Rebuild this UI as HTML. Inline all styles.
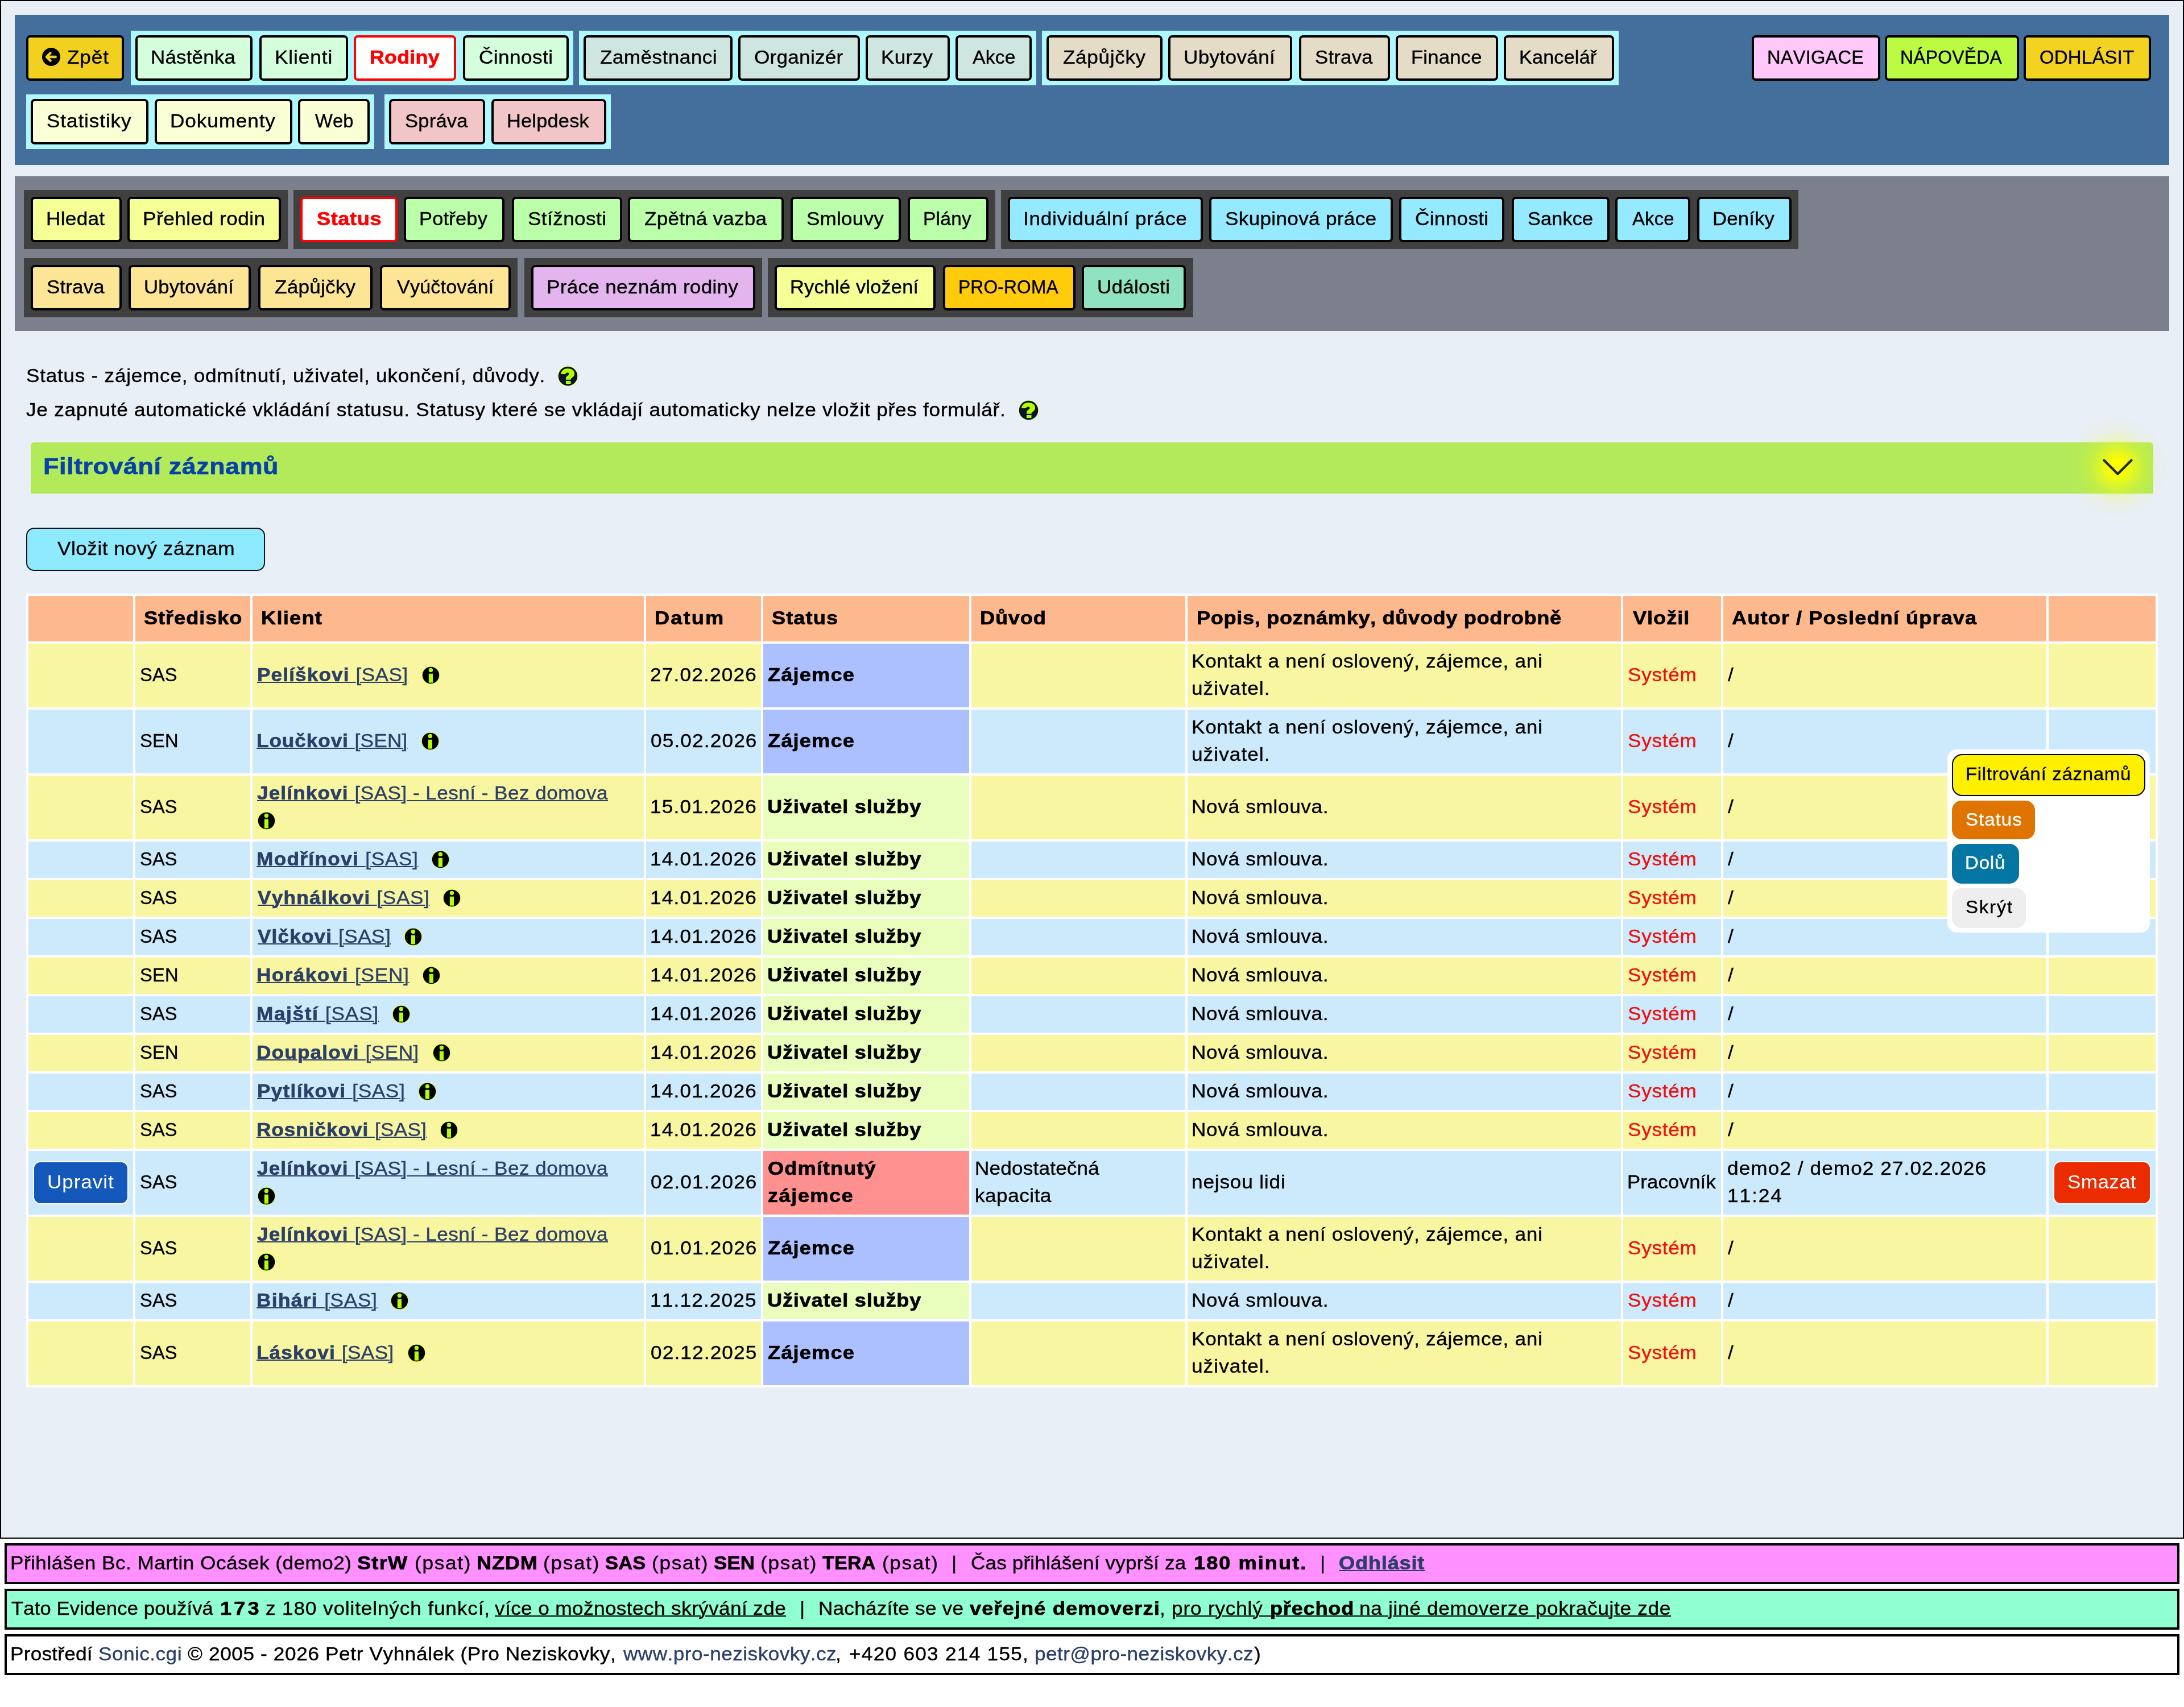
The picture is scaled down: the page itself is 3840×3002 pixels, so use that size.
<!DOCTYPE html>
<html lang="cs"><head><meta charset="utf-8"><title>Status</title><style>
html,body{margin:0;padding:0;background:#fff;}
body{width:3840px;height:3002px;position:relative;font-family:"Liberation Sans",sans-serif;font-kerning:none;}
#all{position:absolute;left:0;top:0;width:3840px;height:3002px;overflow:hidden;will-change:transform;}
.b{position:absolute;box-sizing:border-box;display:block;}
.t{position:absolute;white-space:pre;display:block;transform-origin:0 0;color:#000;-webkit-text-stroke:0.4px;text-decoration-thickness:1.6px;text-underline-offset:1px;}
b{font-weight:700;-webkit-text-stroke:0.7px;text-decoration-thickness:2.4px;}
</style></head><body><div id="all">
<div class="b" style="left:0;top:0;width:3840px;height:2706px;background:#e8eff7;border:2px solid #000"></div>
<div class="b" style="left:26px;top:26px;width:3788px;height:264px;background:#446e9b;"></div>
<div class="b" style="left:46px;top:62px;width:172px;height:80px;background:#f2d01f;border:4px solid #000;border-radius:7px;"></div>
<svg class="b" style="left:74px;top:84.0px" width="32" height="32" viewBox="0 0 32 32"><circle cx="16" cy="16" r="16" fill="#000"/><path d="M23.7 16 H8.2 M14.6 9.3 L7.9 16 L14.6 22.7" stroke="#f2d01f" stroke-width="4.4" fill="none" stroke-linecap="round" stroke-linejoin="round"/></svg>
<span class="t" style="left:117.58px;top:80.00px;font-size:33.5px;line-height:42px;letter-spacing:0.822px;transform:scaleX(1.0500);">Zpět</span>
<div class="b" style="left:230px;top:54px;width:778px;height:96px;background:#b0f8ff;"></div>
<div class="b" style="left:238px;top:62px;width:206px;height:80px;background:#d5ffdc;border:4px solid #000;border-radius:7px;"></div>
<span class="t" style="left:265.14px;top:80.00px;font-size:33.5px;line-height:42px;letter-spacing:0.200px;transform:scaleX(1.0415);">Nástěnka</span>
<div class="b" style="left:456px;top:62px;width:156px;height:80px;background:#d5ffdc;border:4px solid #000;border-radius:7px;"></div>
<span class="t" style="left:483.11px;top:80.00px;font-size:33.5px;line-height:42px;letter-spacing:0.865px;transform:scaleX(1.0500);">Klienti</span>
<div class="b" style="left:622px;top:62px;width:180px;height:80px;background:#fff;border:4px solid #f00;border-radius:7px;"></div>
<span class="t" style="left:649.60px;top:80.00px;font-size:33.5px;line-height:42px;letter-spacing:0.200px;transform:scaleX(1.0705);color:#f00;"><b>Rodiny</b></span>
<div class="b" style="left:814px;top:62px;width:186px;height:80px;background:#d5ffdc;border:4px solid #000;border-radius:7px;"></div>
<span class="t" style="left:842.21px;top:80.00px;font-size:33.5px;line-height:42px;letter-spacing:0.419px;transform:scaleX(1.0500);">Činnosti</span>
<div class="b" style="left:1018px;top:54px;width:804px;height:96px;background:#b0f8ff;"></div>
<div class="b" style="left:1026px;top:62px;width:262px;height:80px;background:#cfe6e0;border:4px solid #000;border-radius:7px;"></div>
<span class="t" style="left:1054.88px;top:80.00px;font-size:33.5px;line-height:42px;letter-spacing:0.393px;transform:scaleX(1.0500);">Zaměstnanci</span>
<div class="b" style="left:1298px;top:62px;width:214px;height:80px;background:#cfe6e0;border:4px solid #000;border-radius:7px;"></div>
<span class="t" style="left:1326.33px;top:80.00px;font-size:33.5px;line-height:42px;letter-spacing:0.215px;transform:scaleX(1.0500);">Organizér</span>
<div class="b" style="left:1522px;top:62px;width:148px;height:80px;background:#cfe6e0;border:4px solid #000;border-radius:7px;"></div>
<span class="t" style="left:1549.11px;top:80.00px;font-size:33.5px;line-height:42px;letter-spacing:0.248px;transform:scaleX(1.0500);">Kurzy</span>
<div class="b" style="left:1680px;top:62px;width:134px;height:80px;background:#cfe6e0;border:4px solid #000;border-radius:7px;"></div>
<span class="t" style="left:1709.93px;top:80.00px;font-size:33.5px;line-height:42px;letter-spacing:0.200px;transform:scaleX(1.0065);">Akce</span>
<div class="b" style="left:1832px;top:54px;width:1014px;height:96px;background:#b0f8ff;"></div>
<div class="b" style="left:1840px;top:62px;width:204px;height:80px;background:#e5dcc8;border:4px solid #000;border-radius:7px;"></div>
<span class="t" style="left:1868.88px;top:80.00px;font-size:33.5px;line-height:42px;letter-spacing:0.603px;transform:scaleX(1.0500);">Zápůjčky</span>
<div class="b" style="left:2054px;top:62px;width:218px;height:80px;background:#e5dcc8;border:4px solid #000;border-radius:7px;"></div>
<span class="t" style="left:2081.29px;top:80.00px;font-size:33.5px;line-height:42px;letter-spacing:0.299px;transform:scaleX(1.0500);">Ubytování</span>
<div class="b" style="left:2284px;top:62px;width:160px;height:80px;background:#e5dcc8;border:4px solid #000;border-radius:7px;"></div>
<span class="t" style="left:2312.42px;top:80.00px;font-size:33.5px;line-height:42px;letter-spacing:0.200px;transform:scaleX(1.0384);">Strava</span>
<div class="b" style="left:2454px;top:62px;width:180px;height:80px;background:#e5dcc8;border:4px solid #000;border-radius:7px;"></div>
<span class="t" style="left:2481.16px;top:80.00px;font-size:33.5px;line-height:42px;letter-spacing:0.200px;transform:scaleX(1.0332);">Finance</span>
<div class="b" style="left:2644px;top:62px;width:194px;height:80px;background:#e5dcc8;border:4px solid #000;border-radius:7px;"></div>
<span class="t" style="left:2671.20px;top:80.00px;font-size:33.5px;line-height:42px;letter-spacing:0.200px;transform:scaleX(1.0193);">Kancelář</span>
<div class="b" style="left:3080px;top:62px;width:226px;height:80px;background:#ffc8fa;border:4px solid #000;border-radius:7px;"></div>
<span class="t" style="left:3107.32px;top:80.00px;font-size:33.5px;line-height:42px;letter-spacing:0.200px;transform:scaleX(0.9745);">NAVIGACE</span>
<div class="b" style="left:3314px;top:62px;width:236px;height:80px;background:#bbfc43;border:4px solid #000;border-radius:7px;"></div>
<span class="t" style="left:3341.38px;top:80.00px;font-size:33.5px;line-height:42px;letter-spacing:0.200px;transform:scaleX(0.9526);">NÁPOVĚDA</span>
<div class="b" style="left:3558px;top:62px;width:224px;height:80px;background:#f4d320;border:4px solid #000;border-radius:7px;"></div>
<span class="t" style="left:3586.44px;top:80.00px;font-size:33.5px;line-height:42px;letter-spacing:0.200px;transform:scaleX(0.9845);">ODHLÁSIT</span>
<div class="b" style="left:46px;top:166px;width:612px;height:96px;background:#b0f8ff;"></div>
<div class="b" style="left:54px;top:174px;width:207px;height:80px;background:#fbffd6;border:4px solid #000;border-radius:7px;"></div>
<span class="t" style="left:82.40px;top:192.00px;font-size:33.5px;line-height:42px;letter-spacing:0.839px;transform:scaleX(1.0500);">Statistiky</span>
<div class="b" style="left:272px;top:174px;width:242px;height:80px;background:#fbffd6;border:4px solid #000;border-radius:7px;"></div>
<span class="t" style="left:299.11px;top:192.00px;font-size:33.5px;line-height:42px;letter-spacing:0.840px;transform:scaleX(1.0500);">Dokumenty</span>
<div class="b" style="left:524px;top:174px;width:126px;height:80px;background:#fbffd6;border:4px solid #000;border-radius:7px;"></div>
<span class="t" style="left:553.86px;top:192.00px;font-size:33.5px;line-height:42px;letter-spacing:0.200px;transform:scaleX(0.9745);">Web</span>
<div class="b" style="left:676px;top:166px;width:398px;height:96px;background:#b0f8ff;"></div>
<div class="b" style="left:684px;top:174px;width:169px;height:80px;background:#f2c6c9;border:4px solid #000;border-radius:7px;"></div>
<span class="t" style="left:712.43px;top:192.00px;font-size:33.5px;line-height:42px;letter-spacing:0.200px;transform:scaleX(1.0320);">Správa</span>
<div class="b" style="left:864px;top:174px;width:202px;height:80px;background:#f2c6c9;border:4px solid #000;border-radius:7px;"></div>
<span class="t" style="left:891.18px;top:192.00px;font-size:33.5px;line-height:42px;letter-spacing:0.200px;transform:scaleX(1.0263);">Helpdesk</span>
<div class="b" style="left:26px;top:310px;width:3788px;height:272px;background:#7b808c;"></div>
<div class="b" style="left:42px;top:334px;width:464px;height:104px;background:#404040;"></div>
<div class="b" style="left:54px;top:346px;width:160px;height:80px;background:#f5ff95;border:4px solid #000;border-radius:7px;"></div>
<span class="t" style="left:81.11px;top:364.00px;font-size:33.5px;line-height:42px;letter-spacing:0.279px;transform:scaleX(1.0500);">Hledat</span>
<div class="b" style="left:224px;top:346px;width:270px;height:80px;background:#f5ff95;border:4px solid #000;border-radius:7px;"></div>
<span class="t" style="left:251.11px;top:364.00px;font-size:33.5px;line-height:42px;letter-spacing:0.471px;transform:scaleX(1.0500);">Přehled rodin</span>
<div class="b" style="left:516px;top:334px;width:1234px;height:104px;background:#404040;"></div>
<div class="b" style="left:528px;top:346px;width:171px;height:80px;background:#fff;border:4px solid #f00;border-radius:7px;"></div>
<span class="t" style="left:556.96px;top:364.00px;font-size:33.5px;line-height:42px;letter-spacing:0.547px;transform:scaleX(1.0800);color:#f00;"><b>Status</b></span>
<div class="b" style="left:710px;top:346px;width:177px;height:80px;background:#bbffaa;border:4px solid #000;border-radius:7px;"></div>
<span class="t" style="left:737.18px;top:364.00px;font-size:33.5px;line-height:42px;letter-spacing:0.200px;transform:scaleX(1.0278);">Potřeby</span>
<div class="b" style="left:900px;top:346px;width:194px;height:80px;background:#bbffaa;border:4px solid #000;border-radius:7px;"></div>
<span class="t" style="left:928.40px;top:364.00px;font-size:33.5px;line-height:42px;letter-spacing:0.366px;transform:scaleX(1.0500);">Stížnosti</span>
<div class="b" style="left:1104px;top:346px;width:274px;height:80px;background:#bbffaa;border:4px solid #000;border-radius:7px;"></div>
<span class="t" style="left:1132.89px;top:364.00px;font-size:33.5px;line-height:42px;letter-spacing:0.200px;transform:scaleX(1.0483);">Zpětná vazba</span>
<div class="b" style="left:1390px;top:346px;width:194px;height:80px;background:#bbffaa;border:4px solid #000;border-radius:7px;"></div>
<span class="t" style="left:1418.41px;top:364.00px;font-size:33.5px;line-height:42px;letter-spacing:0.200px;transform:scaleX(1.0463);">Smlouvy</span>
<div class="b" style="left:1596px;top:346px;width:142px;height:80px;background:#bbffaa;border:4px solid #000;border-radius:7px;"></div>
<span class="t" style="left:1623.24px;top:364.00px;font-size:33.5px;line-height:42px;letter-spacing:0.200px;transform:scaleX(1.0026);">Plány</span>
<div class="b" style="left:1760px;top:334px;width:1402px;height:104px;background:#404040;"></div>
<div class="b" style="left:1772px;top:346px;width:343px;height:80px;background:#96eaff;border:4px solid #000;border-radius:7px;"></div>
<span class="t" style="left:1798.75px;top:364.00px;font-size:33.5px;line-height:42px;letter-spacing:0.678px;transform:scaleX(1.0500);">Individuální práce</span>
<div class="b" style="left:2126px;top:346px;width:323px;height:80px;background:#96eaff;border:4px solid #000;border-radius:7px;"></div>
<span class="t" style="left:2154.40px;top:364.00px;font-size:33.5px;line-height:42px;letter-spacing:0.281px;transform:scaleX(1.0500);">Skupinová práce</span>
<div class="b" style="left:2460px;top:346px;width:185px;height:80px;background:#96eaff;border:4px solid #000;border-radius:7px;"></div>
<span class="t" style="left:2488.21px;top:364.00px;font-size:33.5px;line-height:42px;letter-spacing:0.283px;transform:scaleX(1.0500);">Činnosti</span>
<div class="b" style="left:2658px;top:346px;width:172px;height:80px;background:#96eaff;border:4px solid #000;border-radius:7px;"></div>
<span class="t" style="left:2686.45px;top:364.00px;font-size:33.5px;line-height:42px;letter-spacing:0.200px;transform:scaleX(1.0207);">Sankce</span>
<div class="b" style="left:2840px;top:346px;width:132px;height:80px;background:#96eaff;border:4px solid #000;border-radius:7px;"></div>
<span class="t" style="left:2869.94px;top:364.00px;font-size:33.5px;line-height:42px;letter-spacing:0.200px;transform:scaleX(0.9793);">Akce</span>
<div class="b" style="left:2984px;top:346px;width:166px;height:80px;background:#96eaff;border:4px solid #000;border-radius:7px;"></div>
<span class="t" style="left:3011.16px;top:364.00px;font-size:33.5px;line-height:42px;letter-spacing:0.200px;transform:scaleX(1.0347);">Deníky</span>
<div class="b" style="left:42px;top:454px;width:868px;height:104px;background:#404040;"></div>
<div class="b" style="left:54px;top:466px;width:160px;height:80px;background:#fce695;border:4px solid #000;border-radius:7px;"></div>
<span class="t" style="left:82.42px;top:484.00px;font-size:33.5px;line-height:42px;letter-spacing:0.200px;transform:scaleX(1.0384);">Strava</span>
<div class="b" style="left:226px;top:466px;width:215px;height:80px;background:#fce695;border:4px solid #000;border-radius:7px;"></div>
<span class="t" style="left:253.32px;top:484.00px;font-size:33.5px;line-height:42px;letter-spacing:0.200px;transform:scaleX(1.0355);">Ubytování</span>
<div class="b" style="left:454px;top:466px;width:201px;height:80px;background:#fce695;border:4px solid #000;border-radius:7px;"></div>
<span class="t" style="left:482.88px;top:484.00px;font-size:33.5px;line-height:42px;letter-spacing:0.200px;transform:scaleX(1.0497);">Zápůjčky</span>
<div class="b" style="left:668px;top:466px;width:230px;height:80px;background:#fce695;border:4px solid #000;border-radius:7px;"></div>
<span class="t" style="left:697.85px;top:484.00px;font-size:33.5px;line-height:42px;letter-spacing:0.200px;transform:scaleX(1.0166);">Vyúčtování</span>
<div class="b" style="left:922px;top:454px;width:418px;height:104px;background:#404040;"></div>
<div class="b" style="left:934px;top:466px;width:394px;height:80px;background:#e3b4ee;border:4px solid #000;border-radius:7px;"></div>
<span class="t" style="left:961.11px;top:484.00px;font-size:33.5px;line-height:42px;letter-spacing:0.242px;transform:scaleX(1.0500);">Práce neznám rodiny</span>
<div class="b" style="left:1350px;top:454px;width:748px;height:104px;background:#404040;"></div>
<div class="b" style="left:1362px;top:466px;width:283px;height:80px;background:#f5ff95;border:4px solid #000;border-radius:7px;"></div>
<span class="t" style="left:1389.18px;top:484.00px;font-size:33.5px;line-height:42px;letter-spacing:0.200px;transform:scaleX(1.0251);">Rychlé vložení</span>
<div class="b" style="left:1658px;top:466px;width:233px;height:80px;background:#ffcb0b;border:4px solid #000;border-radius:7px;"></div>
<span class="t" style="left:1685.40px;top:484.00px;font-size:33.5px;line-height:42px;letter-spacing:0.200px;transform:scaleX(0.9462);">PRO-ROMA</span>
<div class="b" style="left:1902px;top:466px;width:183px;height:80px;background:#90e3c0;border:4px solid #000;border-radius:7px;"></div>
<span class="t" style="left:1929.30px;top:484.00px;font-size:33.5px;line-height:42px;letter-spacing:0.200px;transform:scaleX(1.0460);">Události</span>
<span class="t" style="left:45.90px;top:640.00px;font-size:33.5px;line-height:42px;letter-spacing:0.698px;transform:scaleX(1.0500);">Status - zájemce, odmítnutí, uživatel, ukončení, důvody.</span>
<svg class="b" style="left:980.7px;top:643.6px" width="35" height="35" viewBox="0 0 35 35"><circle cx="17.5" cy="17.5" r="17.3" fill="#d0f000"/><circle cx="17.5" cy="17.5" r="16.7" fill="#0a1424"/><path fill="#b2ff00" d="M4.8 14.1 C6 8 10.5 3.9 16.9 3.9 C24.5 3.9 29.1 8 29.1 13 C29.1 17.3 26.5 19.3 24 20.8 C22.8 21.6 22.5 22.4 22.5 23.8 L13.9 23.8 L13.9 21.8 C13.9 18.9 15.6 17.5 17.6 16.2 C19 15.3 19.7 14.6 19.7 13.6 C19.7 12.1 18.6 11.2 16.7 11.2 C14.8 11.2 13.5 12.2 13 14.1 Z M13.9 26 H22.5 V31 H13.9 Z"/></svg>
<span class="t" style="left:46.45px;top:700.00px;font-size:33.5px;line-height:42px;letter-spacing:0.703px;transform:scaleX(1.0500);">Je zapnuté automatické vkládání statusu. Statusy které se vkládají automaticky nelze vložit přes formulář.</span>
<svg class="b" style="left:1790.7px;top:703.6px" width="35" height="35" viewBox="0 0 35 35"><circle cx="17.5" cy="17.5" r="17.3" fill="#d0f000"/><circle cx="17.5" cy="17.5" r="16.7" fill="#0a1424"/><path fill="#b2ff00" d="M4.8 14.1 C6 8 10.5 3.9 16.9 3.9 C24.5 3.9 29.1 8 29.1 13 C29.1 17.3 26.5 19.3 24 20.8 C22.8 21.6 22.5 22.4 22.5 23.8 L13.9 23.8 L13.9 21.8 C13.9 18.9 15.6 17.5 17.6 16.2 C19 15.3 19.7 14.6 19.7 13.6 C19.7 12.1 18.6 11.2 16.7 11.2 C14.8 11.2 13.5 12.2 13 14.1 Z M13.9 26 H22.5 V31 H13.9 Z"/></svg>
<div class="b" style="left:54px;top:778px;width:3732px;height:90px;background:#b3ea5a;border-radius:6px 6px 0 0"></div>
<div class="b" style="left:3633px;top:732px;width:180px;height:180px;background:radial-gradient(circle closest-side,#ffff00 0%,rgba(255,255,0,.95) 16%,rgba(255,255,0,.52) 36%,rgba(255,255,0,.2) 55%,rgba(255,255,0,.06) 76%,rgba(255,255,0,0) 100%)"></div>
<svg class="b" style="left:3690px;top:800px" width="68" height="44" viewBox="0 0 68 44"><path d="M9.5 9.5 L33.5 33.5 L57.5 9.5" stroke="#222b37" stroke-width="4.4" fill="none" stroke-linecap="round" stroke-linejoin="round"/></svg>
<span class="t" style="left:76.00px;top:794.50px;font-size:41.5px;line-height:50px;letter-spacing:0.545px;transform:scaleX(1.0800);color:#0642aa;"><b>Filtrování záznamů</b></span>
<div class="b" style="left:46px;top:928px;width:420px;height:76px;background:#8eebff;border:2px solid #111;border-radius:14px;"></div>
<span class="t" style="left:101.35px;top:943.70px;font-size:33.5px;line-height:42px;letter-spacing:0.473px;transform:scaleX(1.0500);">Vložit nový záznam</span>
<div class="b" style="left:46px;top:1044px;width:3748px;height:1396px;background:#fff;"></div>
<div class="b" style="left:50px;top:1048px;width:184px;height:80px;background:#feb88e;"></div>
<div class="b" style="left:238px;top:1048px;width:202px;height:80px;background:#feb88e;"></div>
<div class="b" style="left:444px;top:1048px;width:688px;height:80px;background:#feb88e;"></div>
<div class="b" style="left:1136px;top:1048px;width:202px;height:80px;background:#feb88e;"></div>
<div class="b" style="left:1342px;top:1048px;width:362px;height:80px;background:#feb88e;"></div>
<div class="b" style="left:1708px;top:1048px;width:376px;height:80px;background:#feb88e;"></div>
<div class="b" style="left:2088px;top:1048px;width:762px;height:80px;background:#feb88e;"></div>
<div class="b" style="left:2854px;top:1048px;width:172px;height:80px;background:#feb88e;"></div>
<div class="b" style="left:3030px;top:1048px;width:568px;height:80px;background:#feb88e;"></div>
<div class="b" style="left:3602px;top:1048px;width:188px;height:80px;background:#feb88e;"></div>
<div class="b" style="left:50px;top:1132px;width:184px;height:112px;background:#f9f6a2;"></div>
<div class="b" style="left:238px;top:1132px;width:202px;height:112px;background:#f9f6a2;"></div>
<div class="b" style="left:444px;top:1132px;width:688px;height:112px;background:#f9f6a2;"></div>
<div class="b" style="left:1136px;top:1132px;width:202px;height:112px;background:#f9f6a2;"></div>
<div class="b" style="left:1342px;top:1132px;width:362px;height:112px;background:#acbfff;"></div>
<div class="b" style="left:1708px;top:1132px;width:376px;height:112px;background:#f9f6a2;"></div>
<div class="b" style="left:2088px;top:1132px;width:762px;height:112px;background:#f9f6a2;"></div>
<div class="b" style="left:2854px;top:1132px;width:172px;height:112px;background:#f9f6a2;"></div>
<div class="b" style="left:3030px;top:1132px;width:568px;height:112px;background:#f9f6a2;"></div>
<div class="b" style="left:3602px;top:1132px;width:188px;height:112px;background:#f9f6a2;"></div>
<div class="b" style="left:50px;top:1248px;width:184px;height:112px;background:#cceafb;"></div>
<div class="b" style="left:238px;top:1248px;width:202px;height:112px;background:#cceafb;"></div>
<div class="b" style="left:444px;top:1248px;width:688px;height:112px;background:#cceafb;"></div>
<div class="b" style="left:1136px;top:1248px;width:202px;height:112px;background:#cceafb;"></div>
<div class="b" style="left:1342px;top:1248px;width:362px;height:112px;background:#acbfff;"></div>
<div class="b" style="left:1708px;top:1248px;width:376px;height:112px;background:#cceafb;"></div>
<div class="b" style="left:2088px;top:1248px;width:762px;height:112px;background:#cceafb;"></div>
<div class="b" style="left:2854px;top:1248px;width:172px;height:112px;background:#cceafb;"></div>
<div class="b" style="left:3030px;top:1248px;width:568px;height:112px;background:#cceafb;"></div>
<div class="b" style="left:3602px;top:1248px;width:188px;height:112px;background:#cceafb;"></div>
<div class="b" style="left:50px;top:1364px;width:184px;height:112px;background:#f9f6a2;"></div>
<div class="b" style="left:238px;top:1364px;width:202px;height:112px;background:#f9f6a2;"></div>
<div class="b" style="left:444px;top:1364px;width:688px;height:112px;background:#f9f6a2;"></div>
<div class="b" style="left:1136px;top:1364px;width:202px;height:112px;background:#f9f6a2;"></div>
<div class="b" style="left:1342px;top:1364px;width:362px;height:112px;background:#e9fdbc;"></div>
<div class="b" style="left:1708px;top:1364px;width:376px;height:112px;background:#f9f6a2;"></div>
<div class="b" style="left:2088px;top:1364px;width:762px;height:112px;background:#f9f6a2;"></div>
<div class="b" style="left:2854px;top:1364px;width:172px;height:112px;background:#f9f6a2;"></div>
<div class="b" style="left:3030px;top:1364px;width:568px;height:112px;background:#f9f6a2;"></div>
<div class="b" style="left:3602px;top:1364px;width:188px;height:112px;background:#f9f6a2;"></div>
<div class="b" style="left:50px;top:1480px;width:184px;height:64px;background:#cceafb;"></div>
<div class="b" style="left:238px;top:1480px;width:202px;height:64px;background:#cceafb;"></div>
<div class="b" style="left:444px;top:1480px;width:688px;height:64px;background:#cceafb;"></div>
<div class="b" style="left:1136px;top:1480px;width:202px;height:64px;background:#cceafb;"></div>
<div class="b" style="left:1342px;top:1480px;width:362px;height:64px;background:#e9fdbc;"></div>
<div class="b" style="left:1708px;top:1480px;width:376px;height:64px;background:#cceafb;"></div>
<div class="b" style="left:2088px;top:1480px;width:762px;height:64px;background:#cceafb;"></div>
<div class="b" style="left:2854px;top:1480px;width:172px;height:64px;background:#cceafb;"></div>
<div class="b" style="left:3030px;top:1480px;width:568px;height:64px;background:#cceafb;"></div>
<div class="b" style="left:3602px;top:1480px;width:188px;height:64px;background:#cceafb;"></div>
<div class="b" style="left:50px;top:1548px;width:184px;height:64px;background:#f9f6a2;"></div>
<div class="b" style="left:238px;top:1548px;width:202px;height:64px;background:#f9f6a2;"></div>
<div class="b" style="left:444px;top:1548px;width:688px;height:64px;background:#f9f6a2;"></div>
<div class="b" style="left:1136px;top:1548px;width:202px;height:64px;background:#f9f6a2;"></div>
<div class="b" style="left:1342px;top:1548px;width:362px;height:64px;background:#e9fdbc;"></div>
<div class="b" style="left:1708px;top:1548px;width:376px;height:64px;background:#f9f6a2;"></div>
<div class="b" style="left:2088px;top:1548px;width:762px;height:64px;background:#f9f6a2;"></div>
<div class="b" style="left:2854px;top:1548px;width:172px;height:64px;background:#f9f6a2;"></div>
<div class="b" style="left:3030px;top:1548px;width:568px;height:64px;background:#f9f6a2;"></div>
<div class="b" style="left:3602px;top:1548px;width:188px;height:64px;background:#f9f6a2;"></div>
<div class="b" style="left:50px;top:1616px;width:184px;height:64px;background:#cceafb;"></div>
<div class="b" style="left:238px;top:1616px;width:202px;height:64px;background:#cceafb;"></div>
<div class="b" style="left:444px;top:1616px;width:688px;height:64px;background:#cceafb;"></div>
<div class="b" style="left:1136px;top:1616px;width:202px;height:64px;background:#cceafb;"></div>
<div class="b" style="left:1342px;top:1616px;width:362px;height:64px;background:#e9fdbc;"></div>
<div class="b" style="left:1708px;top:1616px;width:376px;height:64px;background:#cceafb;"></div>
<div class="b" style="left:2088px;top:1616px;width:762px;height:64px;background:#cceafb;"></div>
<div class="b" style="left:2854px;top:1616px;width:172px;height:64px;background:#cceafb;"></div>
<div class="b" style="left:3030px;top:1616px;width:568px;height:64px;background:#cceafb;"></div>
<div class="b" style="left:3602px;top:1616px;width:188px;height:64px;background:#cceafb;"></div>
<div class="b" style="left:50px;top:1684px;width:184px;height:64px;background:#f9f6a2;"></div>
<div class="b" style="left:238px;top:1684px;width:202px;height:64px;background:#f9f6a2;"></div>
<div class="b" style="left:444px;top:1684px;width:688px;height:64px;background:#f9f6a2;"></div>
<div class="b" style="left:1136px;top:1684px;width:202px;height:64px;background:#f9f6a2;"></div>
<div class="b" style="left:1342px;top:1684px;width:362px;height:64px;background:#e9fdbc;"></div>
<div class="b" style="left:1708px;top:1684px;width:376px;height:64px;background:#f9f6a2;"></div>
<div class="b" style="left:2088px;top:1684px;width:762px;height:64px;background:#f9f6a2;"></div>
<div class="b" style="left:2854px;top:1684px;width:172px;height:64px;background:#f9f6a2;"></div>
<div class="b" style="left:3030px;top:1684px;width:568px;height:64px;background:#f9f6a2;"></div>
<div class="b" style="left:3602px;top:1684px;width:188px;height:64px;background:#f9f6a2;"></div>
<div class="b" style="left:50px;top:1752px;width:184px;height:64px;background:#cceafb;"></div>
<div class="b" style="left:238px;top:1752px;width:202px;height:64px;background:#cceafb;"></div>
<div class="b" style="left:444px;top:1752px;width:688px;height:64px;background:#cceafb;"></div>
<div class="b" style="left:1136px;top:1752px;width:202px;height:64px;background:#cceafb;"></div>
<div class="b" style="left:1342px;top:1752px;width:362px;height:64px;background:#e9fdbc;"></div>
<div class="b" style="left:1708px;top:1752px;width:376px;height:64px;background:#cceafb;"></div>
<div class="b" style="left:2088px;top:1752px;width:762px;height:64px;background:#cceafb;"></div>
<div class="b" style="left:2854px;top:1752px;width:172px;height:64px;background:#cceafb;"></div>
<div class="b" style="left:3030px;top:1752px;width:568px;height:64px;background:#cceafb;"></div>
<div class="b" style="left:3602px;top:1752px;width:188px;height:64px;background:#cceafb;"></div>
<div class="b" style="left:50px;top:1820px;width:184px;height:64px;background:#f9f6a2;"></div>
<div class="b" style="left:238px;top:1820px;width:202px;height:64px;background:#f9f6a2;"></div>
<div class="b" style="left:444px;top:1820px;width:688px;height:64px;background:#f9f6a2;"></div>
<div class="b" style="left:1136px;top:1820px;width:202px;height:64px;background:#f9f6a2;"></div>
<div class="b" style="left:1342px;top:1820px;width:362px;height:64px;background:#e9fdbc;"></div>
<div class="b" style="left:1708px;top:1820px;width:376px;height:64px;background:#f9f6a2;"></div>
<div class="b" style="left:2088px;top:1820px;width:762px;height:64px;background:#f9f6a2;"></div>
<div class="b" style="left:2854px;top:1820px;width:172px;height:64px;background:#f9f6a2;"></div>
<div class="b" style="left:3030px;top:1820px;width:568px;height:64px;background:#f9f6a2;"></div>
<div class="b" style="left:3602px;top:1820px;width:188px;height:64px;background:#f9f6a2;"></div>
<div class="b" style="left:50px;top:1888px;width:184px;height:64px;background:#cceafb;"></div>
<div class="b" style="left:238px;top:1888px;width:202px;height:64px;background:#cceafb;"></div>
<div class="b" style="left:444px;top:1888px;width:688px;height:64px;background:#cceafb;"></div>
<div class="b" style="left:1136px;top:1888px;width:202px;height:64px;background:#cceafb;"></div>
<div class="b" style="left:1342px;top:1888px;width:362px;height:64px;background:#e9fdbc;"></div>
<div class="b" style="left:1708px;top:1888px;width:376px;height:64px;background:#cceafb;"></div>
<div class="b" style="left:2088px;top:1888px;width:762px;height:64px;background:#cceafb;"></div>
<div class="b" style="left:2854px;top:1888px;width:172px;height:64px;background:#cceafb;"></div>
<div class="b" style="left:3030px;top:1888px;width:568px;height:64px;background:#cceafb;"></div>
<div class="b" style="left:3602px;top:1888px;width:188px;height:64px;background:#cceafb;"></div>
<div class="b" style="left:50px;top:1956px;width:184px;height:64px;background:#f9f6a2;"></div>
<div class="b" style="left:238px;top:1956px;width:202px;height:64px;background:#f9f6a2;"></div>
<div class="b" style="left:444px;top:1956px;width:688px;height:64px;background:#f9f6a2;"></div>
<div class="b" style="left:1136px;top:1956px;width:202px;height:64px;background:#f9f6a2;"></div>
<div class="b" style="left:1342px;top:1956px;width:362px;height:64px;background:#e9fdbc;"></div>
<div class="b" style="left:1708px;top:1956px;width:376px;height:64px;background:#f9f6a2;"></div>
<div class="b" style="left:2088px;top:1956px;width:762px;height:64px;background:#f9f6a2;"></div>
<div class="b" style="left:2854px;top:1956px;width:172px;height:64px;background:#f9f6a2;"></div>
<div class="b" style="left:3030px;top:1956px;width:568px;height:64px;background:#f9f6a2;"></div>
<div class="b" style="left:3602px;top:1956px;width:188px;height:64px;background:#f9f6a2;"></div>
<div class="b" style="left:50px;top:2024px;width:184px;height:112px;background:#cceafb;"></div>
<div class="b" style="left:238px;top:2024px;width:202px;height:112px;background:#cceafb;"></div>
<div class="b" style="left:444px;top:2024px;width:688px;height:112px;background:#cceafb;"></div>
<div class="b" style="left:1136px;top:2024px;width:202px;height:112px;background:#cceafb;"></div>
<div class="b" style="left:1342px;top:2024px;width:362px;height:112px;background:#ff9090;"></div>
<div class="b" style="left:1708px;top:2024px;width:376px;height:112px;background:#cceafb;"></div>
<div class="b" style="left:2088px;top:2024px;width:762px;height:112px;background:#cceafb;"></div>
<div class="b" style="left:2854px;top:2024px;width:172px;height:112px;background:#cceafb;"></div>
<div class="b" style="left:3030px;top:2024px;width:568px;height:112px;background:#cceafb;"></div>
<div class="b" style="left:3602px;top:2024px;width:188px;height:112px;background:#cceafb;"></div>
<div class="b" style="left:50px;top:2140px;width:184px;height:112px;background:#f9f6a2;"></div>
<div class="b" style="left:238px;top:2140px;width:202px;height:112px;background:#f9f6a2;"></div>
<div class="b" style="left:444px;top:2140px;width:688px;height:112px;background:#f9f6a2;"></div>
<div class="b" style="left:1136px;top:2140px;width:202px;height:112px;background:#f9f6a2;"></div>
<div class="b" style="left:1342px;top:2140px;width:362px;height:112px;background:#acbfff;"></div>
<div class="b" style="left:1708px;top:2140px;width:376px;height:112px;background:#f9f6a2;"></div>
<div class="b" style="left:2088px;top:2140px;width:762px;height:112px;background:#f9f6a2;"></div>
<div class="b" style="left:2854px;top:2140px;width:172px;height:112px;background:#f9f6a2;"></div>
<div class="b" style="left:3030px;top:2140px;width:568px;height:112px;background:#f9f6a2;"></div>
<div class="b" style="left:3602px;top:2140px;width:188px;height:112px;background:#f9f6a2;"></div>
<div class="b" style="left:50px;top:2256px;width:184px;height:64px;background:#cceafb;"></div>
<div class="b" style="left:238px;top:2256px;width:202px;height:64px;background:#cceafb;"></div>
<div class="b" style="left:444px;top:2256px;width:688px;height:64px;background:#cceafb;"></div>
<div class="b" style="left:1136px;top:2256px;width:202px;height:64px;background:#cceafb;"></div>
<div class="b" style="left:1342px;top:2256px;width:362px;height:64px;background:#e9fdbc;"></div>
<div class="b" style="left:1708px;top:2256px;width:376px;height:64px;background:#cceafb;"></div>
<div class="b" style="left:2088px;top:2256px;width:762px;height:64px;background:#cceafb;"></div>
<div class="b" style="left:2854px;top:2256px;width:172px;height:64px;background:#cceafb;"></div>
<div class="b" style="left:3030px;top:2256px;width:568px;height:64px;background:#cceafb;"></div>
<div class="b" style="left:3602px;top:2256px;width:188px;height:64px;background:#cceafb;"></div>
<div class="b" style="left:50px;top:2324px;width:184px;height:112px;background:#f9f6a2;"></div>
<div class="b" style="left:238px;top:2324px;width:202px;height:112px;background:#f9f6a2;"></div>
<div class="b" style="left:444px;top:2324px;width:688px;height:112px;background:#f9f6a2;"></div>
<div class="b" style="left:1136px;top:2324px;width:202px;height:112px;background:#f9f6a2;"></div>
<div class="b" style="left:1342px;top:2324px;width:362px;height:112px;background:#acbfff;"></div>
<div class="b" style="left:1708px;top:2324px;width:376px;height:112px;background:#f9f6a2;"></div>
<div class="b" style="left:2088px;top:2324px;width:762px;height:112px;background:#f9f6a2;"></div>
<div class="b" style="left:2854px;top:2324px;width:172px;height:112px;background:#f9f6a2;"></div>
<div class="b" style="left:3030px;top:2324px;width:568px;height:112px;background:#f9f6a2;"></div>
<div class="b" style="left:3602px;top:2324px;width:188px;height:112px;background:#f9f6a2;"></div>
<span class="t" style="left:252.96px;top:1065.50px;font-size:33.5px;line-height:42px;letter-spacing:0.877px;transform:scaleX(1.0800);"><b>Středisko</b></span>
<span class="t" style="left:458.58px;top:1065.50px;font-size:33.5px;line-height:42px;letter-spacing:1.178px;transform:scaleX(1.0800);"><b>Klient</b></span>
<span class="t" style="left:1150.58px;top:1065.50px;font-size:33.5px;line-height:42px;letter-spacing:1.990px;transform:scaleX(1.0800);"><b>Datum</b></span>
<span class="t" style="left:1357.46px;top:1065.50px;font-size:33.5px;line-height:42px;letter-spacing:1.010px;transform:scaleX(1.0800);"><b>Status</b></span>
<span class="t" style="left:1722.58px;top:1065.50px;font-size:33.5px;line-height:42px;letter-spacing:0.753px;transform:scaleX(1.0800);"><b>Důvod</b></span>
<span class="t" style="left:2103.58px;top:1065.50px;font-size:33.5px;line-height:42px;letter-spacing:0.598px;transform:scaleX(1.0800);"><b>Popis, poznámky, důvody podrobně</b></span>
<span class="t" style="left:2871.25px;top:1065.50px;font-size:33.5px;line-height:42px;letter-spacing:0.895px;transform:scaleX(1.0800);"><b>Vložil</b></span>
<span class="t" style="left:3045.10px;top:1065.50px;font-size:33.5px;line-height:42px;letter-spacing:1.014px;transform:scaleX(1.0800);"><b>Autor / Poslední úprava</b></span>
<span class="t" style="left:245.52px;top:1166.00px;font-size:33.5px;line-height:42px;letter-spacing:0.200px;transform:scaleX(0.9709);">SAS</span>
<span class="t" style="left:452.15px;top:1166.00px;font-size:33.5px;line-height:42px;letter-spacing:0.416px;transform:scaleX(1.0500);color:#2b3f68;text-decoration-line:underline;"><b style="letter-spacing:1.066px">Pelíškovi </b>[SAS]</span>
<svg class="b" style="left:741.7px;top:1172.3px" width="31" height="31" viewBox="0 0 31 31"><circle cx="15.5" cy="15.5" r="15.5" fill="#d8ff00"/><circle cx="15.5" cy="15.5" r="14.7" fill="#000"/><circle cx="15.4" cy="6.4" r="3.7" fill="#b2ff00"/><rect x="11.8" y="12.7" width="7.2" height="15.9" fill="#b2ff00"/></svg>
<span class="t" style="left:1143.23px;top:1166.00px;font-size:33.5px;line-height:42px;letter-spacing:1.139px;transform:scaleX(1.0500);">27.02.2026</span>
<span class="t" style="left:1349.92px;top:1166.00px;font-size:33.5px;line-height:42px;letter-spacing:1.081px;transform:scaleX(1.0800);"><b>Zájemce</b></span>
<span class="t" style="left:2094.61px;top:1142.00px;font-size:33.5px;line-height:42px;letter-spacing:0.643px;transform:scaleX(1.0500);">Kontakt a není oslovený, zájemce, ani</span>
<span class="t" style="left:2095.22px;top:1190.00px;font-size:33.5px;line-height:42px;letter-spacing:1.007px;transform:scaleX(1.0500);">uživatel.</span>
<span class="t" style="left:2862.40px;top:1166.00px;font-size:33.5px;line-height:42px;letter-spacing:0.694px;transform:scaleX(1.0500);color:#ee1111;">Systém</span>
<span class="t" style="left:3037.50px;top:1166.00px;font-size:33.5px;line-height:42px;letter-spacing:0.600px;transform:scaleX(1.0500);">/</span>
<span class="t" style="left:245.51px;top:1282.00px;font-size:33.5px;line-height:42px;letter-spacing:0.200px;transform:scaleX(0.9765);">SEN</span>
<span class="t" style="left:450.95px;top:1282.00px;font-size:33.5px;line-height:42px;letter-spacing:0.232px;transform:scaleX(1.0500);color:#2b3f68;text-decoration-line:underline;"><b style="letter-spacing:0.882px">Loučkovi </b>[SEN]</span>
<svg class="b" style="left:740.7px;top:1288.3px" width="31" height="31" viewBox="0 0 31 31"><circle cx="15.5" cy="15.5" r="15.5" fill="#d8ff00"/><circle cx="15.5" cy="15.5" r="14.7" fill="#000"/><circle cx="15.4" cy="6.4" r="3.7" fill="#b2ff00"/><rect x="11.8" y="12.7" width="7.2" height="15.9" fill="#b2ff00"/></svg>
<span class="t" style="left:1143.63px;top:1282.00px;font-size:33.5px;line-height:42px;letter-spacing:1.098px;transform:scaleX(1.0500);">05.02.2026</span>
<span class="t" style="left:1349.92px;top:1282.00px;font-size:33.5px;line-height:42px;letter-spacing:1.081px;transform:scaleX(1.0800);"><b>Zájemce</b></span>
<span class="t" style="left:2094.61px;top:1258.00px;font-size:33.5px;line-height:42px;letter-spacing:0.643px;transform:scaleX(1.0500);">Kontakt a není oslovený, zájemce, ani</span>
<span class="t" style="left:2095.22px;top:1306.00px;font-size:33.5px;line-height:42px;letter-spacing:1.007px;transform:scaleX(1.0500);">uživatel.</span>
<span class="t" style="left:2862.40px;top:1282.00px;font-size:33.5px;line-height:42px;letter-spacing:0.694px;transform:scaleX(1.0500);color:#ee1111;">Systém</span>
<span class="t" style="left:3037.50px;top:1282.00px;font-size:33.5px;line-height:42px;letter-spacing:0.600px;transform:scaleX(1.0500);">/</span>
<span class="t" style="left:245.52px;top:1398.00px;font-size:33.5px;line-height:42px;letter-spacing:0.200px;transform:scaleX(0.9709);">SAS</span>
<span class="t" style="left:451.67px;top:1374.00px;font-size:33.5px;line-height:42px;letter-spacing:0.418px;transform:scaleX(1.0500);color:#2b3f68;text-decoration-line:underline;"><b style="letter-spacing:1.068px">Jelínkovi </b>[SAS] - Lesní - Bez domova</span>
<svg class="b" style="left:452.6px;top:1428.2px" width="31" height="31" viewBox="0 0 31 31"><circle cx="15.5" cy="15.5" r="15.5" fill="#d8ff00"/><circle cx="15.5" cy="15.5" r="14.7" fill="#000"/><circle cx="15.4" cy="6.4" r="3.7" fill="#b2ff00"/><rect x="11.8" y="12.7" width="7.2" height="15.9" fill="#b2ff00"/></svg>
<span class="t" style="left:1143.32px;top:1398.00px;font-size:33.5px;line-height:42px;letter-spacing:1.130px;transform:scaleX(1.0500);">15.01.2026</span>
<span class="t" style="left:1348.83px;top:1398.00px;font-size:33.5px;line-height:42px;letter-spacing:0.727px;transform:scaleX(1.0800);"><b>Uživatel služby</b></span>
<span class="t" style="left:2094.61px;top:1398.00px;font-size:33.5px;line-height:42px;letter-spacing:0.632px;transform:scaleX(1.0500);">Nová smlouva.</span>
<span class="t" style="left:2862.40px;top:1398.00px;font-size:33.5px;line-height:42px;letter-spacing:0.694px;transform:scaleX(1.0500);color:#ee1111;">Systém</span>
<span class="t" style="left:3037.50px;top:1398.00px;font-size:33.5px;line-height:42px;letter-spacing:0.600px;transform:scaleX(1.0500);">/</span>
<span class="t" style="left:245.52px;top:1490.00px;font-size:33.5px;line-height:42px;letter-spacing:0.200px;transform:scaleX(0.9709);">SAS</span>
<span class="t" style="left:450.95px;top:1490.00px;font-size:33.5px;line-height:42px;letter-spacing:0.632px;transform:scaleX(1.0500);color:#2b3f68;text-decoration-line:underline;"><b style="letter-spacing:1.282px">Modřínovi </b>[SAS]</span>
<svg class="b" style="left:759.2px;top:1496.3px" width="31" height="31" viewBox="0 0 31 31"><circle cx="15.5" cy="15.5" r="15.5" fill="#d8ff00"/><circle cx="15.5" cy="15.5" r="14.7" fill="#000"/><circle cx="15.4" cy="6.4" r="3.7" fill="#b2ff00"/><rect x="11.8" y="12.7" width="7.2" height="15.9" fill="#b2ff00"/></svg>
<span class="t" style="left:1143.32px;top:1490.00px;font-size:33.5px;line-height:42px;letter-spacing:1.130px;transform:scaleX(1.0500);">14.01.2026</span>
<span class="t" style="left:1348.83px;top:1490.00px;font-size:33.5px;line-height:42px;letter-spacing:0.727px;transform:scaleX(1.0800);"><b>Uživatel služby</b></span>
<span class="t" style="left:2094.61px;top:1490.00px;font-size:33.5px;line-height:42px;letter-spacing:0.632px;transform:scaleX(1.0500);">Nová smlouva.</span>
<span class="t" style="left:2862.40px;top:1490.00px;font-size:33.5px;line-height:42px;letter-spacing:0.694px;transform:scaleX(1.0500);color:#ee1111;">Systém</span>
<span class="t" style="left:3037.50px;top:1490.00px;font-size:33.5px;line-height:42px;letter-spacing:0.600px;transform:scaleX(1.0500);">/</span>
<span class="t" style="left:245.52px;top:1558.00px;font-size:33.5px;line-height:42px;letter-spacing:0.200px;transform:scaleX(0.9709);">SAS</span>
<span class="t" style="left:453.06px;top:1558.00px;font-size:33.5px;line-height:42px;letter-spacing:0.560px;transform:scaleX(1.0500);color:#2b3f68;text-decoration-line:underline;"><b style="letter-spacing:1.210px">Vyhnálkovi </b>[SAS]</span>
<svg class="b" style="left:779.2px;top:1564.3px" width="31" height="31" viewBox="0 0 31 31"><circle cx="15.5" cy="15.5" r="15.5" fill="#d8ff00"/><circle cx="15.5" cy="15.5" r="14.7" fill="#000"/><circle cx="15.4" cy="6.4" r="3.7" fill="#b2ff00"/><rect x="11.8" y="12.7" width="7.2" height="15.9" fill="#b2ff00"/></svg>
<span class="t" style="left:1143.32px;top:1558.00px;font-size:33.5px;line-height:42px;letter-spacing:1.130px;transform:scaleX(1.0500);">14.01.2026</span>
<span class="t" style="left:1348.83px;top:1558.00px;font-size:33.5px;line-height:42px;letter-spacing:0.727px;transform:scaleX(1.0800);"><b>Uživatel služby</b></span>
<span class="t" style="left:2094.61px;top:1558.00px;font-size:33.5px;line-height:42px;letter-spacing:0.632px;transform:scaleX(1.0500);">Nová smlouva.</span>
<span class="t" style="left:2862.40px;top:1558.00px;font-size:33.5px;line-height:42px;letter-spacing:0.694px;transform:scaleX(1.0500);color:#ee1111;">Systém</span>
<span class="t" style="left:3037.50px;top:1558.00px;font-size:33.5px;line-height:42px;letter-spacing:0.600px;transform:scaleX(1.0500);">/</span>
<span class="t" style="left:245.52px;top:1626.00px;font-size:33.5px;line-height:42px;letter-spacing:0.200px;transform:scaleX(0.9709);">SAS</span>
<span class="t" style="left:453.06px;top:1626.00px;font-size:33.5px;line-height:42px;letter-spacing:0.429px;transform:scaleX(1.0500);color:#2b3f68;text-decoration-line:underline;"><b style="letter-spacing:1.079px">Vlčkovi </b>[SAS]</span>
<svg class="b" style="left:711.2px;top:1632.3px" width="31" height="31" viewBox="0 0 31 31"><circle cx="15.5" cy="15.5" r="15.5" fill="#d8ff00"/><circle cx="15.5" cy="15.5" r="14.7" fill="#000"/><circle cx="15.4" cy="6.4" r="3.7" fill="#b2ff00"/><rect x="11.8" y="12.7" width="7.2" height="15.9" fill="#b2ff00"/></svg>
<span class="t" style="left:1143.32px;top:1626.00px;font-size:33.5px;line-height:42px;letter-spacing:1.130px;transform:scaleX(1.0500);">14.01.2026</span>
<span class="t" style="left:1348.83px;top:1626.00px;font-size:33.5px;line-height:42px;letter-spacing:0.727px;transform:scaleX(1.0800);"><b>Uživatel služby</b></span>
<span class="t" style="left:2094.61px;top:1626.00px;font-size:33.5px;line-height:42px;letter-spacing:0.632px;transform:scaleX(1.0500);">Nová smlouva.</span>
<span class="t" style="left:2862.40px;top:1626.00px;font-size:33.5px;line-height:42px;letter-spacing:0.694px;transform:scaleX(1.0500);color:#ee1111;">Systém</span>
<span class="t" style="left:3037.50px;top:1626.00px;font-size:33.5px;line-height:42px;letter-spacing:0.600px;transform:scaleX(1.0500);">/</span>
<span class="t" style="left:245.51px;top:1694.00px;font-size:33.5px;line-height:42px;letter-spacing:0.200px;transform:scaleX(0.9765);">SEN</span>
<span class="t" style="left:450.95px;top:1694.00px;font-size:33.5px;line-height:42px;letter-spacing:0.700px;transform:scaleX(1.0500);color:#2b3f68;text-decoration-line:underline;"><b style="letter-spacing:1.350px">Horákovi </b>[SEN]</span>
<svg class="b" style="left:743.2px;top:1700.3px" width="31" height="31" viewBox="0 0 31 31"><circle cx="15.5" cy="15.5" r="15.5" fill="#d8ff00"/><circle cx="15.5" cy="15.5" r="14.7" fill="#000"/><circle cx="15.4" cy="6.4" r="3.7" fill="#b2ff00"/><rect x="11.8" y="12.7" width="7.2" height="15.9" fill="#b2ff00"/></svg>
<span class="t" style="left:1143.32px;top:1694.00px;font-size:33.5px;line-height:42px;letter-spacing:1.130px;transform:scaleX(1.0500);">14.01.2026</span>
<span class="t" style="left:1348.83px;top:1694.00px;font-size:33.5px;line-height:42px;letter-spacing:0.727px;transform:scaleX(1.0800);"><b>Uživatel služby</b></span>
<span class="t" style="left:2094.61px;top:1694.00px;font-size:33.5px;line-height:42px;letter-spacing:0.632px;transform:scaleX(1.0500);">Nová smlouva.</span>
<span class="t" style="left:2862.40px;top:1694.00px;font-size:33.5px;line-height:42px;letter-spacing:0.694px;transform:scaleX(1.0500);color:#ee1111;">Systém</span>
<span class="t" style="left:3037.50px;top:1694.00px;font-size:33.5px;line-height:42px;letter-spacing:0.600px;transform:scaleX(1.0500);">/</span>
<span class="t" style="left:245.52px;top:1762.00px;font-size:33.5px;line-height:42px;letter-spacing:0.200px;transform:scaleX(0.9709);">SAS</span>
<span class="t" style="left:450.95px;top:1762.00px;font-size:33.5px;line-height:42px;letter-spacing:0.883px;transform:scaleX(1.0500);color:#2b3f68;text-decoration-line:underline;"><b style="letter-spacing:1.533px">Majští </b>[SAS]</span>
<svg class="b" style="left:689.7px;top:1768.3px" width="31" height="31" viewBox="0 0 31 31"><circle cx="15.5" cy="15.5" r="15.5" fill="#d8ff00"/><circle cx="15.5" cy="15.5" r="14.7" fill="#000"/><circle cx="15.4" cy="6.4" r="3.7" fill="#b2ff00"/><rect x="11.8" y="12.7" width="7.2" height="15.9" fill="#b2ff00"/></svg>
<span class="t" style="left:1143.32px;top:1762.00px;font-size:33.5px;line-height:42px;letter-spacing:1.130px;transform:scaleX(1.0500);">14.01.2026</span>
<span class="t" style="left:1348.83px;top:1762.00px;font-size:33.5px;line-height:42px;letter-spacing:0.727px;transform:scaleX(1.0800);"><b>Uživatel služby</b></span>
<span class="t" style="left:2094.61px;top:1762.00px;font-size:33.5px;line-height:42px;letter-spacing:0.632px;transform:scaleX(1.0500);">Nová smlouva.</span>
<span class="t" style="left:2862.40px;top:1762.00px;font-size:33.5px;line-height:42px;letter-spacing:0.694px;transform:scaleX(1.0500);color:#ee1111;">Systém</span>
<span class="t" style="left:3037.50px;top:1762.00px;font-size:33.5px;line-height:42px;letter-spacing:0.600px;transform:scaleX(1.0500);">/</span>
<span class="t" style="left:245.51px;top:1830.00px;font-size:33.5px;line-height:42px;letter-spacing:0.200px;transform:scaleX(0.9765);">SEN</span>
<span class="t" style="left:450.95px;top:1830.00px;font-size:33.5px;line-height:42px;letter-spacing:0.468px;transform:scaleX(1.0500);color:#2b3f68;text-decoration-line:underline;"><b style="letter-spacing:1.118px">Doupalovi </b>[SEN]</span>
<svg class="b" style="left:760.7px;top:1836.3px" width="31" height="31" viewBox="0 0 31 31"><circle cx="15.5" cy="15.5" r="15.5" fill="#d8ff00"/><circle cx="15.5" cy="15.5" r="14.7" fill="#000"/><circle cx="15.4" cy="6.4" r="3.7" fill="#b2ff00"/><rect x="11.8" y="12.7" width="7.2" height="15.9" fill="#b2ff00"/></svg>
<span class="t" style="left:1143.32px;top:1830.00px;font-size:33.5px;line-height:42px;letter-spacing:1.130px;transform:scaleX(1.0500);">14.01.2026</span>
<span class="t" style="left:1348.83px;top:1830.00px;font-size:33.5px;line-height:42px;letter-spacing:0.727px;transform:scaleX(1.0800);"><b>Uživatel služby</b></span>
<span class="t" style="left:2094.61px;top:1830.00px;font-size:33.5px;line-height:42px;letter-spacing:0.632px;transform:scaleX(1.0500);">Nová smlouva.</span>
<span class="t" style="left:2862.40px;top:1830.00px;font-size:33.5px;line-height:42px;letter-spacing:0.694px;transform:scaleX(1.0500);color:#ee1111;">Systém</span>
<span class="t" style="left:3037.50px;top:1830.00px;font-size:33.5px;line-height:42px;letter-spacing:0.600px;transform:scaleX(1.0500);">/</span>
<span class="t" style="left:245.52px;top:1898.00px;font-size:33.5px;line-height:42px;letter-spacing:0.200px;transform:scaleX(0.9709);">SAS</span>
<span class="t" style="left:452.15px;top:1898.00px;font-size:33.5px;line-height:42px;letter-spacing:0.576px;transform:scaleX(1.0500);color:#2b3f68;text-decoration-line:underline;"><b style="letter-spacing:1.226px">Pytlíkovi </b>[SAS]</span>
<svg class="b" style="left:736.2px;top:1904.3px" width="31" height="31" viewBox="0 0 31 31"><circle cx="15.5" cy="15.5" r="15.5" fill="#d8ff00"/><circle cx="15.5" cy="15.5" r="14.7" fill="#000"/><circle cx="15.4" cy="6.4" r="3.7" fill="#b2ff00"/><rect x="11.8" y="12.7" width="7.2" height="15.9" fill="#b2ff00"/></svg>
<span class="t" style="left:1143.32px;top:1898.00px;font-size:33.5px;line-height:42px;letter-spacing:1.130px;transform:scaleX(1.0500);">14.01.2026</span>
<span class="t" style="left:1348.83px;top:1898.00px;font-size:33.5px;line-height:42px;letter-spacing:0.727px;transform:scaleX(1.0800);"><b>Uživatel služby</b></span>
<span class="t" style="left:2094.61px;top:1898.00px;font-size:33.5px;line-height:42px;letter-spacing:0.632px;transform:scaleX(1.0500);">Nová smlouva.</span>
<span class="t" style="left:2862.40px;top:1898.00px;font-size:33.5px;line-height:42px;letter-spacing:0.694px;transform:scaleX(1.0500);color:#ee1111;">Systém</span>
<span class="t" style="left:3037.50px;top:1898.00px;font-size:33.5px;line-height:42px;letter-spacing:0.600px;transform:scaleX(1.0500);">/</span>
<span class="t" style="left:245.52px;top:1966.00px;font-size:33.5px;line-height:42px;letter-spacing:0.200px;transform:scaleX(0.9709);">SAS</span>
<span class="t" style="left:450.95px;top:1966.00px;font-size:33.5px;line-height:42px;letter-spacing:0.254px;transform:scaleX(1.0500);color:#2b3f68;text-decoration-line:underline;"><b style="letter-spacing:0.904px">Rosničkovi </b>[SAS]</span>
<svg class="b" style="left:774.2px;top:1972.3px" width="31" height="31" viewBox="0 0 31 31"><circle cx="15.5" cy="15.5" r="15.5" fill="#d8ff00"/><circle cx="15.5" cy="15.5" r="14.7" fill="#000"/><circle cx="15.4" cy="6.4" r="3.7" fill="#b2ff00"/><rect x="11.8" y="12.7" width="7.2" height="15.9" fill="#b2ff00"/></svg>
<span class="t" style="left:1143.32px;top:1966.00px;font-size:33.5px;line-height:42px;letter-spacing:1.130px;transform:scaleX(1.0500);">14.01.2026</span>
<span class="t" style="left:1348.83px;top:1966.00px;font-size:33.5px;line-height:42px;letter-spacing:0.727px;transform:scaleX(1.0800);"><b>Uživatel služby</b></span>
<span class="t" style="left:2094.61px;top:1966.00px;font-size:33.5px;line-height:42px;letter-spacing:0.632px;transform:scaleX(1.0500);">Nová smlouva.</span>
<span class="t" style="left:2862.40px;top:1966.00px;font-size:33.5px;line-height:42px;letter-spacing:0.694px;transform:scaleX(1.0500);color:#ee1111;">Systém</span>
<span class="t" style="left:3037.50px;top:1966.00px;font-size:33.5px;line-height:42px;letter-spacing:0.600px;transform:scaleX(1.0500);">/</span>
<span class="t" style="left:245.52px;top:2058.00px;font-size:33.5px;line-height:42px;letter-spacing:0.200px;transform:scaleX(0.9709);">SAS</span>
<span class="t" style="left:451.67px;top:2034.00px;font-size:33.5px;line-height:42px;letter-spacing:0.418px;transform:scaleX(1.0500);color:#2b3f68;text-decoration-line:underline;"><b style="letter-spacing:1.068px">Jelínkovi </b>[SAS] - Lesní - Bez domova</span>
<svg class="b" style="left:452.6px;top:2088.2px" width="31" height="31" viewBox="0 0 31 31"><circle cx="15.5" cy="15.5" r="15.5" fill="#d8ff00"/><circle cx="15.5" cy="15.5" r="14.7" fill="#000"/><circle cx="15.4" cy="6.4" r="3.7" fill="#b2ff00"/><rect x="11.8" y="12.7" width="7.2" height="15.9" fill="#b2ff00"/></svg>
<span class="t" style="left:1143.63px;top:2058.00px;font-size:33.5px;line-height:42px;letter-spacing:1.098px;transform:scaleX(1.0500);">02.01.2026</span>
<span class="t" style="left:1349.52px;top:2034.00px;font-size:33.5px;line-height:42px;letter-spacing:1.018px;transform:scaleX(1.0800);"><b>Odmítnutý</b></span>
<span class="t" style="left:1349.55px;top:2082.00px;font-size:33.5px;line-height:42px;letter-spacing:1.371px;transform:scaleX(1.0800);"><b>zájemce</b></span>
<span class="t" style="left:2095.16px;top:2058.00px;font-size:33.5px;line-height:42px;letter-spacing:0.788px;transform:scaleX(1.0500);">nejsou lidi</span>
<span class="t" style="left:1713.62px;top:2034.00px;font-size:33.5px;line-height:42px;letter-spacing:0.200px;transform:scaleX(1.0476);">Nedostatečná</span>
<span class="t" style="left:1714.13px;top:2082.00px;font-size:33.5px;line-height:42px;letter-spacing:0.457px;transform:scaleX(1.0500);">kapacita</span>
<span class="t" style="left:2861.16px;top:2058.00px;font-size:33.5px;line-height:42px;letter-spacing:0.200px;transform:scaleX(1.0348);">Pracovník</span>
<span class="t" style="left:3036.52px;top:2034.00px;font-size:33.5px;line-height:42px;letter-spacing:1.026px;transform:scaleX(1.0500);">demo2 / demo2 27.02.2026</span>
<span class="t" style="left:3037.32px;top:2082.00px;font-size:33.5px;line-height:42px;letter-spacing:1.830px;transform:scaleX(1.0500);">11:24</span>
<span class="t" style="left:245.52px;top:2174.00px;font-size:33.5px;line-height:42px;letter-spacing:0.200px;transform:scaleX(0.9709);">SAS</span>
<span class="t" style="left:451.67px;top:2150.00px;font-size:33.5px;line-height:42px;letter-spacing:0.418px;transform:scaleX(1.0500);color:#2b3f68;text-decoration-line:underline;"><b style="letter-spacing:1.068px">Jelínkovi </b>[SAS] - Lesní - Bez domova</span>
<svg class="b" style="left:452.6px;top:2204.2px" width="31" height="31" viewBox="0 0 31 31"><circle cx="15.5" cy="15.5" r="15.5" fill="#d8ff00"/><circle cx="15.5" cy="15.5" r="14.7" fill="#000"/><circle cx="15.4" cy="6.4" r="3.7" fill="#b2ff00"/><rect x="11.8" y="12.7" width="7.2" height="15.9" fill="#b2ff00"/></svg>
<span class="t" style="left:1143.63px;top:2174.00px;font-size:33.5px;line-height:42px;letter-spacing:1.098px;transform:scaleX(1.0500);">01.01.2026</span>
<span class="t" style="left:1349.92px;top:2174.00px;font-size:33.5px;line-height:42px;letter-spacing:1.081px;transform:scaleX(1.0800);"><b>Zájemce</b></span>
<span class="t" style="left:2094.61px;top:2150.00px;font-size:33.5px;line-height:42px;letter-spacing:0.643px;transform:scaleX(1.0500);">Kontakt a není oslovený, zájemce, ani</span>
<span class="t" style="left:2095.22px;top:2198.00px;font-size:33.5px;line-height:42px;letter-spacing:1.007px;transform:scaleX(1.0500);">uživatel.</span>
<span class="t" style="left:2862.40px;top:2174.00px;font-size:33.5px;line-height:42px;letter-spacing:0.694px;transform:scaleX(1.0500);color:#ee1111;">Systém</span>
<span class="t" style="left:3037.50px;top:2174.00px;font-size:33.5px;line-height:42px;letter-spacing:0.600px;transform:scaleX(1.0500);">/</span>
<span class="t" style="left:245.52px;top:2266.00px;font-size:33.5px;line-height:42px;letter-spacing:0.200px;transform:scaleX(0.9709);">SAS</span>
<span class="t" style="left:450.95px;top:2266.00px;font-size:33.5px;line-height:42px;letter-spacing:0.666px;transform:scaleX(1.0500);color:#2b3f68;text-decoration-line:underline;"><b style="letter-spacing:1.316px">Bihári </b>[SAS]</span>
<svg class="b" style="left:687.2px;top:2272.3px" width="31" height="31" viewBox="0 0 31 31"><circle cx="15.5" cy="15.5" r="15.5" fill="#d8ff00"/><circle cx="15.5" cy="15.5" r="14.7" fill="#000"/><circle cx="15.4" cy="6.4" r="3.7" fill="#b2ff00"/><rect x="11.8" y="12.7" width="7.2" height="15.9" fill="#b2ff00"/></svg>
<span class="t" style="left:1143.32px;top:2266.00px;font-size:33.5px;line-height:42px;letter-spacing:1.123px;transform:scaleX(1.0500);">11.12.2025</span>
<span class="t" style="left:1348.83px;top:2266.00px;font-size:33.5px;line-height:42px;letter-spacing:0.727px;transform:scaleX(1.0800);"><b>Uživatel služby</b></span>
<span class="t" style="left:2094.61px;top:2266.00px;font-size:33.5px;line-height:42px;letter-spacing:0.632px;transform:scaleX(1.0500);">Nová smlouva.</span>
<span class="t" style="left:2862.40px;top:2266.00px;font-size:33.5px;line-height:42px;letter-spacing:0.694px;transform:scaleX(1.0500);color:#ee1111;">Systém</span>
<span class="t" style="left:3037.50px;top:2266.00px;font-size:33.5px;line-height:42px;letter-spacing:0.600px;transform:scaleX(1.0500);">/</span>
<span class="t" style="left:245.52px;top:2358.00px;font-size:33.5px;line-height:42px;letter-spacing:0.200px;transform:scaleX(0.9709);">SAS</span>
<span class="t" style="left:450.95px;top:2358.00px;font-size:33.5px;line-height:42px;letter-spacing:0.413px;transform:scaleX(1.0500);color:#2b3f68;text-decoration-line:underline;"><b style="letter-spacing:1.063px">Láskovi </b>[SAS]</span>
<svg class="b" style="left:716.7px;top:2364.3px" width="31" height="31" viewBox="0 0 31 31"><circle cx="15.5" cy="15.5" r="15.5" fill="#d8ff00"/><circle cx="15.5" cy="15.5" r="14.7" fill="#000"/><circle cx="15.4" cy="6.4" r="3.7" fill="#b2ff00"/><rect x="11.8" y="12.7" width="7.2" height="15.9" fill="#b2ff00"/></svg>
<span class="t" style="left:1143.63px;top:2358.00px;font-size:33.5px;line-height:42px;letter-spacing:1.090px;transform:scaleX(1.0500);">02.12.2025</span>
<span class="t" style="left:1349.92px;top:2358.00px;font-size:33.5px;line-height:42px;letter-spacing:1.081px;transform:scaleX(1.0800);"><b>Zájemce</b></span>
<span class="t" style="left:2094.61px;top:2334.00px;font-size:33.5px;line-height:42px;letter-spacing:0.643px;transform:scaleX(1.0500);">Kontakt a není oslovený, zájemce, ani</span>
<span class="t" style="left:2095.22px;top:2382.00px;font-size:33.5px;line-height:42px;letter-spacing:1.007px;transform:scaleX(1.0500);">uživatel.</span>
<span class="t" style="left:2862.40px;top:2358.00px;font-size:33.5px;line-height:42px;letter-spacing:0.694px;transform:scaleX(1.0500);color:#ee1111;">Systém</span>
<span class="t" style="left:3037.50px;top:2358.00px;font-size:33.5px;line-height:42px;letter-spacing:0.600px;transform:scaleX(1.0500);">/</span>
<div class="b" style="left:58px;top:2042px;width:168px;height:76px;background:#1558bb;border:2px solid #fff;border-radius:13px;"></div>
<span class="t" style="left:83.29px;top:2058.00px;font-size:33.5px;line-height:42px;letter-spacing:0.834px;transform:scaleX(1.0500);color:#fff;-webkit-text-stroke:0;">Upravit</span>
<div class="b" style="left:3610px;top:2042px;width:172px;height:76px;background:#eb2c00;border:2px solid #fff;border-radius:13px;"></div>
<span class="t" style="left:3635.20px;top:2058.00px;font-size:33.5px;line-height:42px;letter-spacing:0.306px;transform:scaleX(1.0500);color:#fff;-webkit-text-stroke:0;">Smazat</span>
<div class="b" style="left:3424px;top:1318px;width:356px;height:322px;background:#fff;border-radius:16px;"></div>
<div class="b" style="left:3432px;top:1326px;width:340px;height:74px;background:#fff000;border:2px solid #000;border-radius:18px;"></div>
<span class="t" style="left:3456.29px;top:1341.00px;font-size:31.5px;line-height:40px;letter-spacing:0.616px;transform:scaleX(1.0500);">Filtrování záznamů</span>
<div class="b" style="left:3432px;top:1408px;width:146px;height:68px;background:#e07400;border-radius:17px;"></div>
<span class="t" style="left:3455.50px;top:1421.00px;font-size:31.5px;line-height:40px;letter-spacing:0.939px;transform:scaleX(1.0500);color:#fff;">Status</span>
<div class="b" style="left:3432px;top:1484px;width:118px;height:70px;background:#0476a3;border-radius:17px;"></div>
<span class="t" style="left:3455.29px;top:1496.50px;font-size:31.5px;line-height:40px;letter-spacing:0.758px;transform:scaleX(1.0500);color:#fff;">Dolů</span>
<div class="b" style="left:3432px;top:1562px;width:130px;height:70px;background:#eeeeee;border-radius:17px;"></div>
<span class="t" style="left:3455.50px;top:1574.50px;font-size:31.5px;line-height:40px;letter-spacing:1.644px;transform:scaleX(1.0500);">Skrýt</span>
<div class="b" style="left:8px;top:2714px;width:3824px;height:72px;background:#ff90ff;border:4px solid #000;"></div>
<div class="b" style="left:8px;top:2794px;width:3824px;height:72px;background:#90ffd2;border:4px solid #000;"></div>
<div class="b" style="left:8px;top:2874px;width:3824px;height:72px;background:#fff;border:4px solid #000;"></div>
<span class="t" style="left:18.11px;top:2728.00px;font-size:33.5px;line-height:42px;letter-spacing:0.436px;transform:scaleX(1.0500);">Přihlášen Bc. Martin Ocásek (demo2)</span>
<span class="t" style="left:627.96px;top:2728.00px;font-size:33.5px;line-height:42px;letter-spacing:1.133px;transform:scaleX(1.0800);"><b>StrW</b></span>
<span class="t" style="left:728.82px;top:2728.00px;font-size:33.5px;line-height:42px;letter-spacing:1.609px;transform:scaleX(1.0500);">(psat)</span>
<span class="t" style="left:837.58px;top:2728.00px;font-size:33.5px;line-height:42px;letter-spacing:0.724px;transform:scaleX(1.0800);"><b>NZDM</b></span>
<span class="t" style="left:954.82px;top:2728.00px;font-size:33.5px;line-height:42px;letter-spacing:1.609px;transform:scaleX(1.0500);">(psat)</span>
<span class="t" style="left:1064.01px;top:2728.00px;font-size:33.5px;line-height:42px;letter-spacing:0.200px;transform:scaleX(1.0297);"><b>SAS</b></span>
<span class="t" style="left:1145.82px;top:2728.00px;font-size:33.5px;line-height:42px;letter-spacing:1.609px;transform:scaleX(1.0500);">(psat)</span>
<span class="t" style="left:1254.50px;top:2728.00px;font-size:33.5px;line-height:42px;letter-spacing:0.200px;transform:scaleX(1.0370);"><b>SEN</b></span>
<span class="t" style="left:1336.82px;top:2728.00px;font-size:33.5px;line-height:42px;letter-spacing:1.609px;transform:scaleX(1.0500);">(psat)</span>
<span class="t" style="left:1446.12px;top:2728.00px;font-size:33.5px;line-height:42px;letter-spacing:0.200px;transform:scaleX(1.0162);"><b>TERA</b></span>
<span class="t" style="left:1550.82px;top:2728.00px;font-size:33.5px;line-height:42px;letter-spacing:1.514px;transform:scaleX(1.0500);">(psat)</span>
<span class="t" style="left:1673.36px;top:2728.00px;font-size:33.5px;line-height:42px;letter-spacing:0.600px;transform:scaleX(1.0500);">|</span>
<span class="t" style="left:1707.22px;top:2728.00px;font-size:33.5px;line-height:42px;letter-spacing:0.200px;transform:scaleX(1.0447);">Čas přihlášení vyprší za</span>
<span class="t" style="left:2099.22px;top:2728.00px;font-size:33.5px;line-height:42px;letter-spacing:1.886px;transform:scaleX(1.0800);"><b>180 minut.</b></span>
<span class="t" style="left:2320.86px;top:2728.00px;font-size:33.5px;line-height:42px;letter-spacing:0.600px;transform:scaleX(1.0500);">|</span>
<span class="t" style="left:2353.52px;top:2728.00px;font-size:33.5px;line-height:42px;letter-spacing:0.752px;transform:scaleX(1.0800);color:#2b3f68;text-decoration-line:underline;"><b>Odhlásit</b></span>
<span class="t" style="left:20.23px;top:2808.00px;font-size:33.5px;line-height:42px;letter-spacing:0.200px;transform:scaleX(1.0290);">Tato Evidence používá</span>
<span class="t" style="left:386.72px;top:2808.00px;font-size:33.5px;line-height:42px;letter-spacing:3.806px;transform:scaleX(1.0800);"><b>173</b></span>
<span class="t" style="left:466.57px;top:2808.00px;font-size:33.5px;line-height:42px;letter-spacing:0.819px;transform:scaleX(1.0500);">z 180 volitelných funkcí,</span>
<span class="t" style="left:869.88px;top:2808.00px;font-size:33.5px;line-height:42px;letter-spacing:0.368px;transform:scaleX(1.0500);text-decoration-line:underline;">více o možnostech skrývání zde</span>
<span class="t" style="left:1405.86px;top:2808.00px;font-size:33.5px;line-height:42px;letter-spacing:0.600px;transform:scaleX(1.0500);">|</span>
<span class="t" style="left:1439.12px;top:2808.00px;font-size:33.5px;line-height:42px;letter-spacing:0.200px;transform:scaleX(1.0491);">Nacházíte se ve</span>
<span class="t" style="left:1704.86px;top:2808.00px;font-size:33.5px;line-height:42px;letter-spacing:1.040px;transform:scaleX(1.0800);"><b>veřejné demoverzi</b></span>
<span class="t" style="left:2039.34px;top:2808.00px;font-size:33.5px;line-height:42px;letter-spacing:0.600px;transform:scaleX(1.0500);">,</span>
<span class="t" style="left:2060.23px;top:2808.00px;font-size:33.5px;line-height:42px;letter-spacing:0.780px;transform:scaleX(1.0500);text-decoration-line:underline;">pro rychlý  </span>
<span class="t" style="left:2232.62px;top:2808.00px;font-size:33.5px;line-height:42px;letter-spacing:0.702px;transform:scaleX(1.0800);text-decoration-line:underline;"><b>přechod</b>  </span>
<span class="t" style="left:2390.16px;top:2808.00px;font-size:33.5px;line-height:42px;letter-spacing:0.658px;transform:scaleX(1.0500);text-decoration-line:underline;">na jiné demoverze pokračujte zde</span>
<span class="t" style="left:18.11px;top:2888.00px;font-size:33.5px;line-height:42px;letter-spacing:0.220px;transform:scaleX(1.0500);">Prostředí</span>
<span class="t" style="left:173.40px;top:2888.00px;font-size:33.5px;line-height:42px;letter-spacing:0.445px;transform:scaleX(1.0500);color:#2b3f68;">Sonic.cgi</span>
<span class="t" style="left:330.47px;top:2888.00px;font-size:33.5px;line-height:42px;letter-spacing:0.595px;transform:scaleX(1.0500);">© 2005 - 2026 Petr Vyhnálek (Pro Neziskovky,</span>
<span class="t" style="left:1096.05px;top:2888.00px;font-size:33.5px;line-height:42px;letter-spacing:0.438px;transform:scaleX(1.0500);color:#2b3f68;">www.pro-neziskovky.cz</span>
<span class="t" style="left:1469.34px;top:2888.00px;font-size:33.5px;line-height:42px;letter-spacing:0.600px;transform:scaleX(1.0500);">,</span>
<span class="t" style="left:1493.28px;top:2888.00px;font-size:33.5px;line-height:42px;letter-spacing:1.220px;transform:scaleX(1.0500);">+420 603 214 155,</span>
<span class="t" style="left:1818.73px;top:2888.00px;font-size:33.5px;line-height:42px;letter-spacing:0.393px;transform:scaleX(1.0500);color:#2b3f68;">petr@pro-neziskovky.cz</span>
<span class="t" style="left:2204.79px;top:2888.00px;font-size:33.5px;line-height:42px;letter-spacing:0.600px;transform:scaleX(1.0500);">)</span>
</div></body></html>
